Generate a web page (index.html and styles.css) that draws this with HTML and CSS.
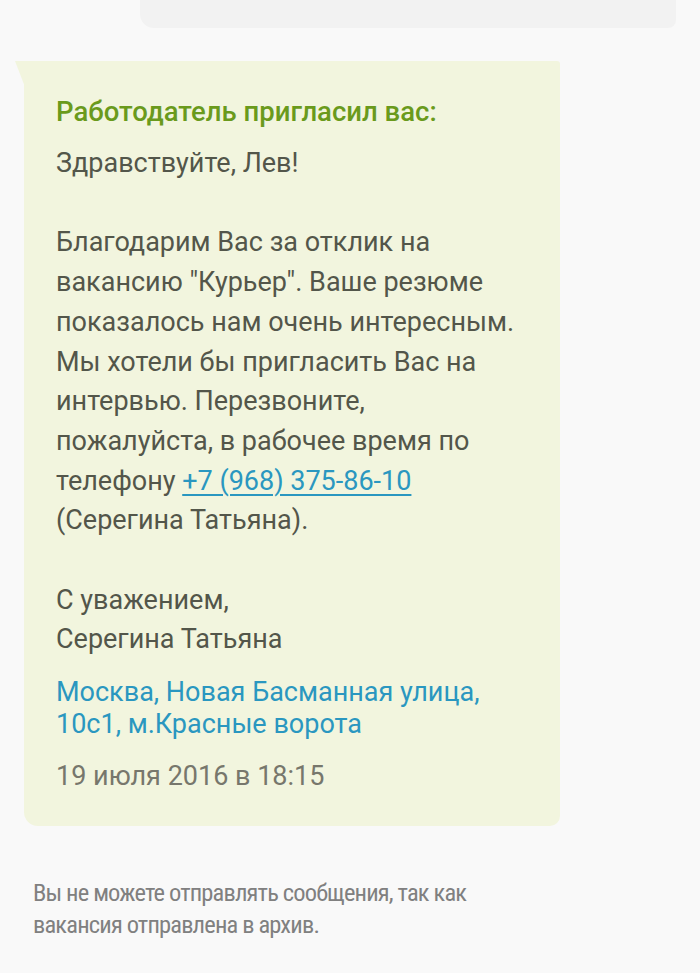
FILE: index.html
```html
<!DOCTYPE html>
<html lang="ru">
<head>
<meta charset="utf-8">
<link rel="stylesheet" href="styles.css">
</head>
<body>
<div class="page">
  <div class="prev-bubble"></div>
  <div class="bubble">
    <div class="title">Работодатель пригласил вас:</div>
    <div class="msg">Здравствуйте, Лев!<br><br>Благодарим Вас за отклик на<br>вакансию "Курьер". Ваше резюме<br>показалось нам очень интересным.<br>Мы хотели бы пригласить Вас на<br>интервью. Перезвоните,<br>пожалуйста, в рабочее время по<br>телефону <a class="phone" href="#">+7 (968) 375-86-10</a><br>(Серегина Татьяна).<br><br>С уважением,<br>Серегина Татьяна</div>
    <div class="address">Москва, Новая Басманная улица,<br>10с1, м.Красные ворота</div>
    <div class="date">19 июля 2016 в 18:15</div>
  </div>
  <div class="notice">Вы не можете отправлять сообщения, так как<br>вакансия отправлена в архив.</div>
</div>
</body>
</html>
```
FILE: styles.css
```css
html, body {
  margin: 0;
  padding: 0;
  background: #f9f9f9;
}
.page {
  width: 700px;
  height: 973px;
  font-family: Roboto, "Noto Sans", sans-serif;
  display: flex;
  flex-direction: column;
}
.prev-bubble {
  margin-left: 140px;
  width: 536px;
  height: 28px;
  background: #f2f2f2;
  border-radius: 0 0 8px 14px;
}
.bubble {
  position: relative;
  margin-top: 33px;
  margin-left: 24px;
  width: 536px;
  box-sizing: border-box;
  padding: 35px 20px 34px 32px;
  background: #f2f5de;
  border-radius: 0 3px 10px 14px;
  white-space: nowrap;
}
.bubble::before {
  content: "";
  position: absolute;
  left: -9px;
  top: 0;
  width: 10px;
  height: 26px;
  background: #f2f5de;
  clip-path: polygon(0 0, 100% 0, 100% 100%);
}
.title {
  font-size: 27.5px;
  font-weight: 500;
  color: #6a9a1c;
  line-height: 32px;
}
.msg {
  margin-top: 16px;
  font-size: 27px;
  line-height: 39.7px;
  color: #53564a;
}
.phone {
  color: #2a97c0;
  text-decoration: underline;
  text-underline-offset: 4px;
  text-decoration-thickness: 1.5px;
}
.address {
  margin-top: 16px;
  font-size: 27px;
  line-height: 32px;
  color: #2a97c0;
}
.date {
  margin-top: 20px;
  font-size: 27px;
  line-height: 32px;
  color: #77776c;
}
.notice {
  margin-top: 51px;
  margin-left: 33px;
  font-family: "Liberation Sans Narrow", "Roboto Condensed", Roboto, sans-serif;
  font-size: 24.5px;
  letter-spacing: -0.85px;
  line-height: 32px;
  color: #808080;
  white-space: nowrap;
}
```
